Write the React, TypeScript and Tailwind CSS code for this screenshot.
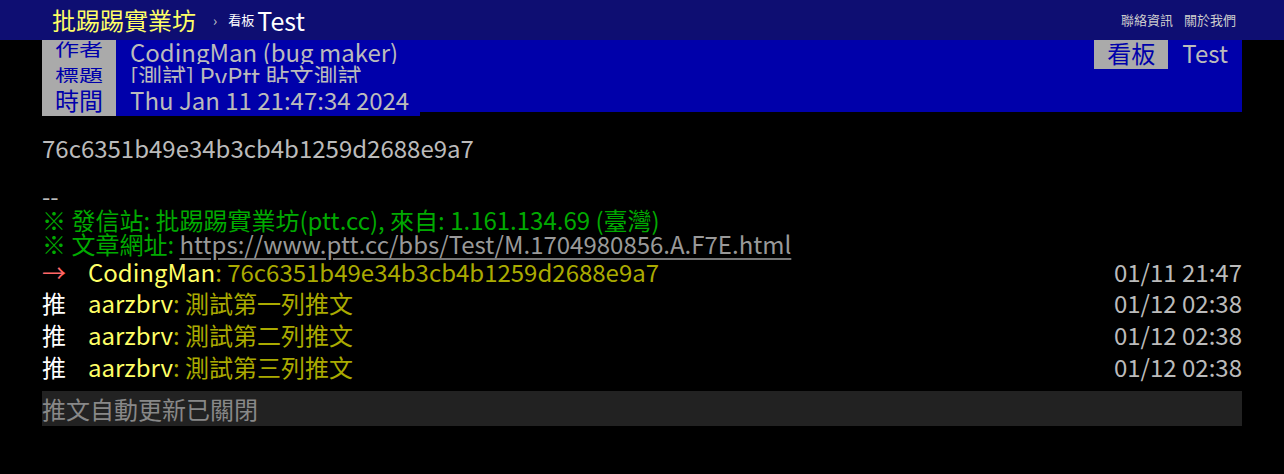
import React from 'react';

interface Push {
  tag: string;
  tagColor: string;
  user: string;
  content: string;
  time: string;
  h: string;
}

const pushes: Push[] = [
  { tag: '→', tagColor: 'text-[#ff6666]', user: 'CodingMan', content: ': 76c6351b49e34b3cb4b1259d2688e9a7', time: '01/11 21:47', h: 'h-[31px] leading-[31px]' },
  { tag: '推', tagColor: 'text-white', user: 'aarzbrv', content: ': 測試第一列推文', time: '01/12 02:38', h: 'h-[32px] leading-[32px]' },
  { tag: '推', tagColor: 'text-white', user: 'aarzbrv', content: ': 測試第二列推文', time: '01/12 02:38', h: 'h-[32px] leading-[32px]' },
  { tag: '推', tagColor: 'text-white', user: 'aarzbrv', content: ': 測試第三列推文', time: '01/12 02:38', h: 'h-[32px] leading-[32px]' },
];

export default function App() {
  return (
    <div className="min-h-screen bg-black text-[#bbbbbb] font-['Noto_Sans_CJK_TC','Noto_Sans',sans-serif]">
      {/* Top bar */}
      <header className="h-10 bg-[#0e0e72] flex items-center justify-between pl-[52px] pr-[48px]">
        <div className="flex items-center">
          <span className="text-[24px] leading-[40px] text-[#ffff66]">批踢踢實業坊</span>
          <span className="ml-[17px] text-[14px] text-[#cccccc]">›</span>
          <span className="ml-[11px] text-[13px] text-white">看板</span>
          <span className="ml-[3px] text-[25px] leading-[40px] text-white">Test</span>
        </div>
        <div className="flex gap-[11px] text-[13px] text-[#cccccc]">
          <span>聯絡資訊</span>
          <span>關於我們</span>
        </div>
      </header>

      <main className="ml-[42px] w-[1200px]">
        {/* Meta lines */}
        <div className="flex items-start">
          <div className="w-[378px]">
            <div className="flex h-[24px] overflow-hidden">
              <div className="w-[74px] bg-[#aaaaaa] text-[#0000aa] flex justify-center">
                <span className="inline-block text-[24px] leading-[24px] scale-y-[0.72] origin-top">作者</span>
              </div>
              <div className="flex-1 bg-[#0000aa] pl-[14px] text-[24px] leading-[24px] whitespace-nowrap">CodingMan (bug maker)</div>
            </div>
            <div className="flex h-[19px] overflow-hidden">
              <div className="w-[74px] bg-[#aaaaaa] text-[#0000aa] flex justify-center">
                <span className="inline-block text-[24px] leading-[24px] mt-[2px] scale-y-[0.72] origin-top">標題</span>
              </div>
              <div className="flex-1 bg-[#0000aa] pl-[14px] text-[24px] leading-[24px] whitespace-nowrap">[測試] PvPtt 貼文測試</div>
            </div>
            <div className="flex h-[33px] overflow-hidden">
              <div className="w-[74px] bg-[#aaaaaa] text-[#0000aa] text-center text-[24px] leading-[33px]">時間</div>
              <div className="flex-1 bg-[#0000aa] pl-[14px] text-[24px] leading-[33px] whitespace-nowrap">Thu Jan 11 21:47:34 2024</div>
            </div>
          </div>
          <div className="flex-1 h-[72px] bg-[#0000aa] flex justify-end items-start">
            <span className="w-[74px] h-[29px] bg-[#aaaaaa] text-[#0000aa] text-[24px] leading-[26px] text-center">看板</span>
            <span className="mx-[14px] text-[24px] leading-[26px]">Test</span>
          </div>
        </div>

        {/* Body */}
        <div className="mt-[20px] text-[24px] leading-[24px]">
          <div>76c6351b49e34b3cb4b1259d2688e9a7</div>
          <div className="h-[24px]" />
          <div>--</div>
          <div className="text-[#00aa00]">※ 發信站: 批踢踢實業坊(ptt.cc), 來自: 1.161.134.69 (臺灣)</div>
          <div className="text-[#00aa00]">
            ※ 文章網址:{' '}
            <a className="text-[#999999] underline decoration-[#777777] underline-offset-[4px]">
              https://www.ptt.cc/bbs/Test/M.1704980856.A.F7E.html
            </a>
          </div>
        </div>

        {/* Pushes */}
        <div>
          {pushes.map((p, i) => (
            <div key={i} className={`flex items-center text-[24px] ${p.h}`}>
              <span className={`w-[46px] ${p.tagColor}`}>{p.tag}</span>
              <span className="text-[#ffff66]">{p.user}</span>
              <span className="text-[#aaaa00]">{p.content}</span>
              <span className="ml-auto">{p.time}</span>
            </div>
          ))}
        </div>

        <div className="mt-[8px] h-[35px] bg-[#222222] text-[#888888] text-[24px] leading-[35px]">推文自動更新已關閉</div>
      </main>
    </div>
  );
}
